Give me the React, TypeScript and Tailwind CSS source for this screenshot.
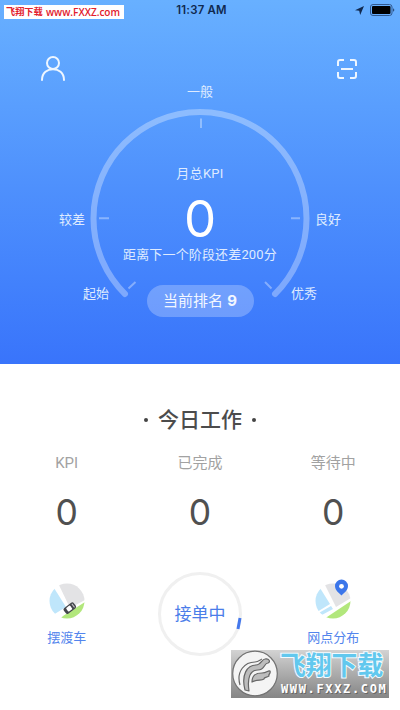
import React from "react";

const stats = [
  { label: "KPI", value: 0 },
  { label: "已完成", value: 0 },
  { label: "等待中", value: 0 },
];

const StatusBar: React.FC = () => (
  <div className="relative flex h-[20px] items-center justify-center">
    <div className="absolute left-1 top-[5px] flex h-[14px] w-[120px] items-center justify-between whitespace-nowrap bg-white pl-[2px] pr-[4px] font-bold text-[#e2202c]">
      <span className="text-[9.2px] leading-none">飞翔下载</span>
      <span className="font-['Open_Sans'] text-[10px] font-semibold leading-none">www.FXXZ.com</span>
    </div>
    <span className="pl-[3px] pt-px font-['Inter'] text-[11.4px] font-semibold leading-none tracking-[0.2px] text-[#10294f]">
      11:37 AM
    </span>
    <div className="absolute right-[5px] top-[4px] flex items-center gap-[6px]">
      <svg width="9" height="9" viewBox="0 0 9 9" fill="#10294f">
        <path d="M9 0 5.2 9 4.2 4.8 0 4.2z" />
      </svg>
      <svg width="25" height="12" viewBox="0 0 25 12">
        <rect x="0.5" y="0.5" width="21.5" height="11" rx="2.5" fill="none" stroke="#31598f" />
        <rect x="2" y="2" width="18.5" height="8" rx="1" fill="#000" />
        <path d="M23.3 4.2c1.3.6 1.3 3 0 3.6z" fill="#10294f" />
      </svg>
    </div>
  </div>
);

const Gauge: React.FC = () => (
  <div className="relative text-[13px] text-[#dfebff]">
    <svg className="absolute left-0 top-0" width="400" height="284" viewBox="0 80 400 284" fill="none">
      <path
        d="M125 294A106.500 106.500 0 1 1 275 294"
        stroke="#fff"
        strokeOpacity="0.32"
        strokeWidth="6"
        strokeLinecap="round"
      />
      <path
        d="M201 118.500V128M99 218.300H109M291 218.300H300M128.500 288.500 135.500 282M265 282 271.500 288.500"
        stroke="#fff"
        strokeOpacity="0.35"
        strokeWidth="2"
      />
    </svg>
    <div className="relative flex flex-col items-center">
      <span className="mt-[2px] h-5 leading-5">一般</span>
      <span className="mt-[62px] h-5 leading-5 tracking-[0.3px]">月总KPI</span>
      <div className="mt-[15px] flex h-[38px] w-[282px] items-center justify-between">
        <span className="pt-[4px]">较差</span>
        <span className="pt-[2px] font-['Inter'] text-[51px] leading-[38px] text-white">0</span>
        <span className="pt-[4px]">良好</span>
      </div>
      <span className="mt-[8px] h-5 leading-5 tracking-[0.15px]">距离下一个阶段还差200分</span>
      <div className="mt-[20px] flex h-8 w-[234px] justify-between">
        <span className="h-[18px] leading-[18px]">起始</span>
        <span className="flex h-8 w-[107px] items-center justify-center gap-1 rounded-full bg-white/25 pt-px text-[15px] text-[#f2f7ff]">
          当前排名 <b className="font-['Inter'] text-[15px]">9</b>
        </span>
        <span className="h-[18px] leading-[18px]">优秀</span>
      </div>
    </div>
  </div>
);

const CarIcon: React.FC = () => (
  <svg width="36" height="36" viewBox="0 0 36 36">
    <clipPath id="carClip">
      <circle cx="18" cy="18" r="17.500" />
    </clipPath>
    <g clipPath="url(#carClip)">
      <rect width="36" height="36" fill="#fff" />
      <path d="M9 0H36V17L21 25z" fill="#e3e3e5" />
      <path d="M0 0 5 5 17 24 4 32H0z" fill="#bfe6fb" />
      <path d="M11 36 14 33 36 19V36z" fill="#b2e77c" />
    </g>
    <g transform="rotate(-37 21 25)">
      <rect x="14.500" y="21.500" width="12.500" height="7" rx="2" fill="#44464c" />
      <rect x="17.500" y="22.700" width="5" height="4.600" rx="1" fill="#fff" />
      <path d="M25 22.800v4.400" stroke="#c8c8cc" />
    </g>
  </svg>
);

const MapIcon: React.FC = () => (
  <svg className="overflow-visible" width="36" height="36" viewBox="0 0 36 36">
    <clipPath id="mapClip">
      <circle cx="18" cy="18" r="17.500" />
    </clipPath>
    <g clipPath="url(#mapClip)">
      <rect width="36" height="36" fill="#fff" />
      <path d="M9 0H36V15L21 24z" fill="#e3e3e5" />
      <path d="M0 0 5 5 15 21 2 29H0z" fill="#bfe6fb" />
      <path d="M2 31 16 23 18 26 5 33z" fill="#bfe6fb" />
      <path d="M9 36 36 18V36z" fill="#b2e77c" />
    </g>
    <path d="M26.500-3.500a6.500 6.500 0 0 1 6.500 6.500C33 7.500 29 10 26.500 12.500 24 10 20 7.500 20 3A6.500 6.500 0 0 1 26.500-3.500z" fill="#3b76ea" />
    <circle cx="26.500" cy="3.300" r="2.400" fill="#fff" />
  </svg>
);

const Watermark: React.FC = () => (
  <div className="absolute left-[231px] top-[650px] flex h-[48px] w-[158px] bg-linear-to-b from-[#d3d3d3] to-[#858585]">
    <svg width="49" height="48" viewBox="0 0 49 48">
      <circle cx="24" cy="23.500" r="22.300" fill="#f4f4f4" stroke="#727272" strokeWidth="1.200" />
      <g stroke="#666" fill="#bdbdbd" strokeWidth="1.200" strokeLinejoin="round">
        <path d="M14 40C10 25 16 15 25 15 30 15 31 9 34 9 38 8 40 12 37 13 33 13 34 20 27 20 19 20 16 28 18 41z" />
        <path d="M21 32C21 24 26 23 31 23 36 23 37 20 39 21 40 24 37 24 38 26 35 28 33 27 33 29 30 31 27 29 21 32z" />
        <path d="M9 35C5 21 14 12 24 12 27 12 29 10 31 9" fill="none" />
      </g>
    </svg>
    <div className="flex flex-col items-start">
      <span className="mt-[2px] h-[31px] whitespace-nowrap text-[25.8px] font-bold leading-[29px] text-[#62c8ee] [-webkit-text-stroke:2px_#f3fbff] [paint-order:stroke_fill]">
        飞翔下载
      </span>
      <span className="h-3 whitespace-nowrap pl-px font-['DejaVu_Sans_Mono'] text-[12px] font-bold leading-3 tracking-[1.650px] text-white [text-shadow:1px_1px_0_#666]">
        WWW.FXXZ.COM
      </span>
    </div>
  </div>
);

const App: React.FC = () => {
  return (
    <div className="relative h-[710px] w-[400px] overflow-hidden bg-white font-['Roboto','Noto_Sans_CJK_SC',sans-serif]">
      <header className="h-[364px] bg-linear-to-b from-[#68b0ff] via-[#4f91fd] to-[#3974fb]">
        <StatusBar />
        <div className="flex h-[60px] items-end justify-between pl-[41px] pr-[43px]">
          <svg className="-mb-[1px]" width="24" height="25" viewBox="0 0 24 25" fill="none" stroke="#eef6ff" strokeWidth="2" strokeLinecap="round">
            <circle cx="12" cy="7" r="6" />
            <path d="M1 24C1 9.500 23 9.500 23 24" />
          </svg>
          <svg className="mb-[1px]" width="20" height="20" viewBox="0 0 20 20" fill="none" stroke="#eef6ff" strokeWidth="2">
            <path d="M1 7V3Q1 1 3 1H7M13 1H17Q19 1 19 3V7M19 13V17Q19 19 17 19H13M7 19H3Q1 19 1 17V13M4 10H16" />
          </svg>
        </div>
        <Gauge />
      </header>

      <main>
        <h2 className="mt-[42px] flex h-7 items-center justify-center gap-[10px] text-[21px] font-medium leading-7 text-[#4c4c4c]">
          <i className="size-1 rounded-full bg-[#444]" />
          今日工作
          <i className="size-1 rounded-full bg-[#444]" />
        </h2>
        <div className="mt-[17px] grid grid-cols-3 text-center">
          {stats.map((stat) => (
            <div key={stat.label} className="flex flex-col items-center">
              <span className="h-6 text-[15px] leading-6 text-[#a2a2a2]">{stat.label}</span>
              <span className="mt-[18px] h-10 font-['Inter'] text-[35.5px] font-normal leading-10 text-[#505050]">
                {stat.value}
              </span>
            </div>
          ))}
        </div>
        <div className="mt-[39px] grid grid-cols-3 justify-items-center text-[13px] text-[#5385ed]">
          <div className="mt-[11px] flex flex-col items-center">
            <CarIcon />
            <span className="mt-[9px] leading-5">摆渡车</span>
          </div>
          <button className="relative flex size-[84px] items-center justify-center rounded-full border-[3px] border-[#f0f0f0] pt-[2px] text-[17px] text-[#4a7de9]">
            接单中
            <svg className="absolute left-[74px] top-[42px]" width="8" height="14" viewBox="0 0 8 14">
              <path d="M5 1 3 12" stroke="#4478ec" strokeWidth="3" />
            </svg>
          </button>
          <div className="mt-[11px] flex flex-col items-center">
            <MapIcon />
            <span className="mt-[9px] leading-5">网点分布</span>
          </div>
        </div>
      </main>
      <Watermark />
    </div>
  );
};

export default App;
